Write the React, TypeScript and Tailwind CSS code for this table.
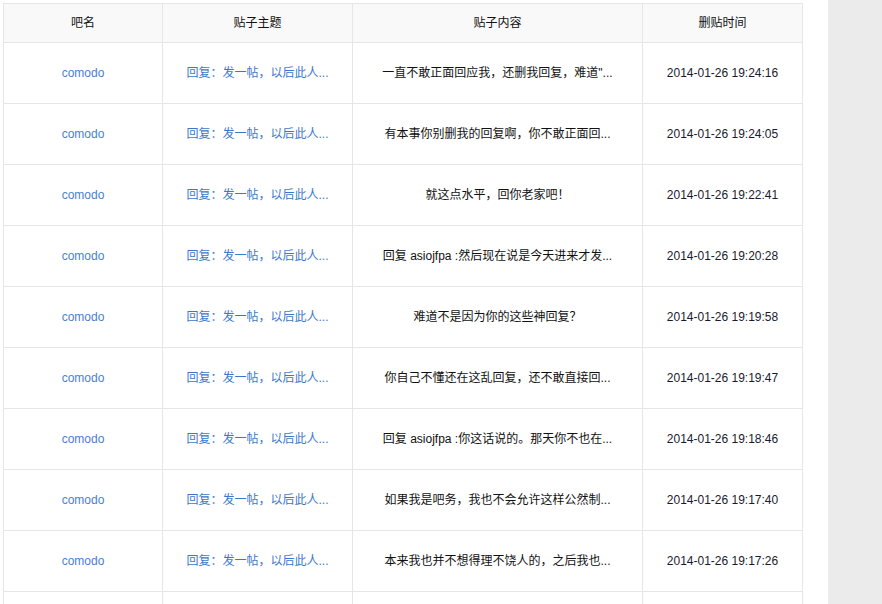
import React from 'react';

const rows = [
  { content: '一直不敢正面回应我，还删我回复，难道"...', time: '2014-01-26 19:24:16' },
  { content: '有本事你别删我的回复啊，你不敢正面回...', time: '2014-01-26 19:24:05' },
  { content: '就这点水平，回你老家吧！', time: '2014-01-26 19:22:41' },
  { content: '回复 asiojfpa :然后现在说是今天进来才发...', time: '2014-01-26 19:20:28' },
  { content: '难道不是因为你的这些神回复？', time: '2014-01-26 19:19:58' },
  { content: '你自己不懂还在这乱回复，还不敢直接回...', time: '2014-01-26 19:19:47' },
  { content: '回复 asiojfpa :你这话说的。那天你不也在...', time: '2014-01-26 19:18:46' },
  { content: '如果我是吧务，我也不会允许这样公然制...', time: '2014-01-26 19:17:40' },
  { content: '本来我也并不想得理不饶人的，之后我也...', time: '2014-01-26 19:17:26' },
  { content: '', time: '' },
];

const cell = 'flex items-center justify-center border-r border-b border-[#e6e6e6] whitespace-nowrap overflow-hidden';

export default function App() {
  return (
    <div className="flex h-[604px] overflow-hidden bg-white text-[12px] font-['Liberation_Sans','Noto_Sans_CJK_SC',sans-serif]">
      <div className="w-[828px] shrink-0 pl-[3px] pt-[3px]">
        <div className="grid grid-cols-[159px_190px_290px_160px] w-[800px] border-l border-t border-[#e6e6e6]">
          {/* header */}
          {['吧名', '贴子主题', '贴子内容', '删贴时间'].map((h) => (
            <div key={h} className={`${cell} h-[39px] bg-[#f9f9f9] text-[#111]`}>
              {h}
            </div>
          ))}

          {rows.map((r, i) => (
            <React.Fragment key={i}>
              <div className={`${cell} h-[61px] text-[#4a80d2]`}>{r.time && 'comodo'}</div>
              <div className={`${cell} h-[61px] text-[#3b78cc]`}>{r.time && '回复：发一帖，以后此人...'}</div>
              <div className={`${cell} h-[61px] text-[#111]`}>{r.content}</div>
              <div className={`${cell} h-[61px] text-[#1a1a2e]`}>{r.time}</div>
            </React.Fragment>
          ))}
        </div>
      </div>
      <div className="flex-1 bg-[#ebebeb]" />
    </div>
  );
}
